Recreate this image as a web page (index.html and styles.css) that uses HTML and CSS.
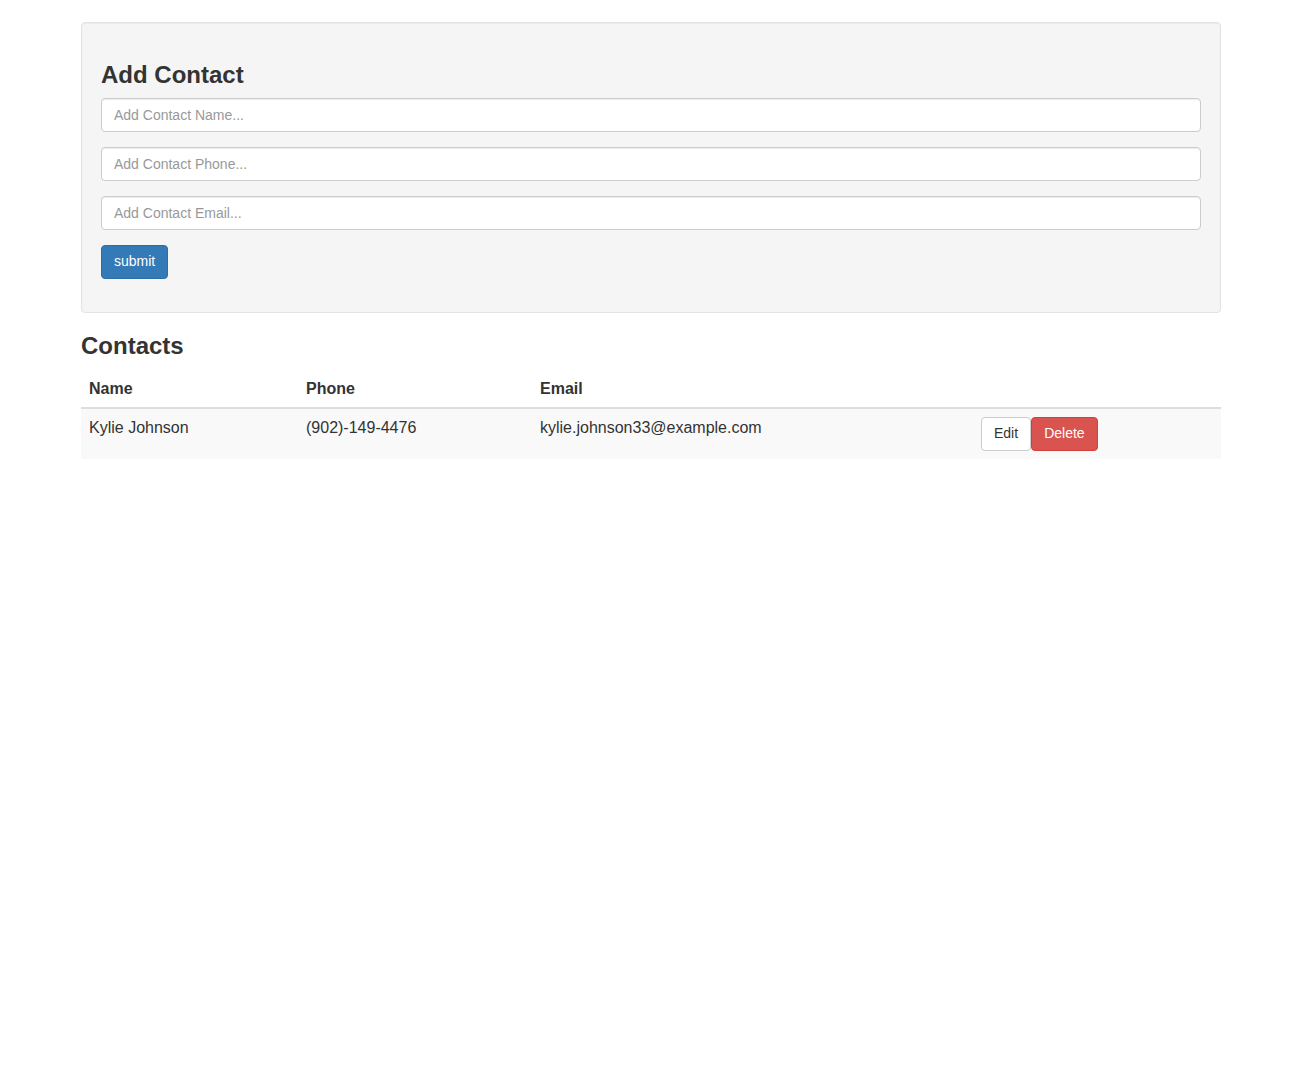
FILE: index.html
```html
<!DOCTYPE html>
<html>
<head>
<meta charset="utf-8">
<title>Contacts</title>
<link rel="stylesheet" href="styles.css">
</head>
<body>
<div class="container">
  <div class="well">
    <h3 class="title">Add Contact</h3>
    <form class="form">
      <div class="form-group"><input class="form-control" type="text" placeholder="Add Contact Name..."></div>
      <div class="form-group"><input class="form-control" type="text" placeholder="Add Contact Phone..."></div>
      <div class="form-group"><input class="form-control" type="text" placeholder="Add Contact Email..."></div>
      <button type="button" class="btn btn-primary">submit</button>
    </form>
  </div>
  <h3 class="title">Contacts</h3>
  <table class="table">
    <thead>
      <tr>
        <th class="col-name">Name</th>
        <th class="col-phone">Phone</th>
        <th class="col-email">Email</th>
        <th class="col-actions"></th>
      </tr>
    </thead>
    <tbody>
      <tr>
        <td>Kylie Johnson</td>
        <td>(902)-149-4476</td>
        <td>kylie.johnson33@example.com</td>
        <td class="actions"><button type="button" class="btn btn-default">Edit</button><button type="button" class="btn btn-danger">Delete</button></td>
      </tr>
    </tbody>
  </table>
</div>
</body>
</html>
```

FILE: styles.css
```css
* { box-sizing: border-box; }
html, body { margin: 0; padding: 0; }
body {
  font-family: "Liberation Sans", Arial, sans-serif;
  font-size: 16px;
  line-height: 1.42857;
  color: #333;
  background: #fff;
}
.container {
  width: 1140px;
  margin: 0 0 0 81px;
  padding-top: 22px;
}
.well {
  background: #f5f5f5;
  border: 1px solid #e3e3e3;
  border-radius: 4px;
  box-shadow: inset 0 1px 1px rgba(0,0,0,0.05);
  padding: 19px 19px 33px;
  margin-bottom: 20px;
}
.title {
  font-size: 24px;
  font-weight: bold;
  line-height: 1.1;
  margin: 20px 0 10px;
  color: #333;
}
.form { margin: 0; }
.form-group { margin-bottom: 15px; }
.form-control {
  display: block;
  width: 100%;
  height: 34px;
  padding: 6px 12px;
  font-family: inherit;
  font-size: 14px;
  line-height: 1.42857;
  color: #555;
  background: #fff;
  border: 1px solid #ccc;
  border-radius: 4px;
  box-shadow: inset 0 1px 1px rgba(0,0,0,0.075);
  outline: none;
}
.form-control::placeholder { color: #999; }
.btn {
  display: inline-block;
  height: 34px;
  padding: 6px 12px;
  font-family: inherit;
  font-size: 14px;
  line-height: 1.42857;
  border: 1px solid transparent;
  border-radius: 4px;
  vertical-align: middle;
  cursor: pointer;
  margin: 0;
}
.btn-primary { background: #337ab7; border-color: #2e6da4; color: #fff; }
.btn-default { background: #fff; border-color: #ccc; color: #333; }
.btn-danger { background: #d9534f; border-color: #d43f3a; color: #fff; }
.table {
  width: 100%;
  border-collapse: collapse;
  border-spacing: 0;
  table-layout: fixed;
}
.table th {
  text-align: left;
  font-weight: bold;
  padding: 9px 8px 8px;
  line-height: 20px;
  border-bottom: 2px solid #ddd;
  vertical-align: bottom;
}
.table td {
  padding: 8px;
  line-height: 1.42857;
  border-top: 1px solid #ddd;
  vertical-align: top;
}
.table tbody tr:nth-child(odd) { background: #f9f9f9; }
.col-name { width: 217px; }
.col-phone { width: 234px; }
.col-email { width: 441px; }
.col-actions { width: 248px; }
.actions { font-size: 0; }
```
